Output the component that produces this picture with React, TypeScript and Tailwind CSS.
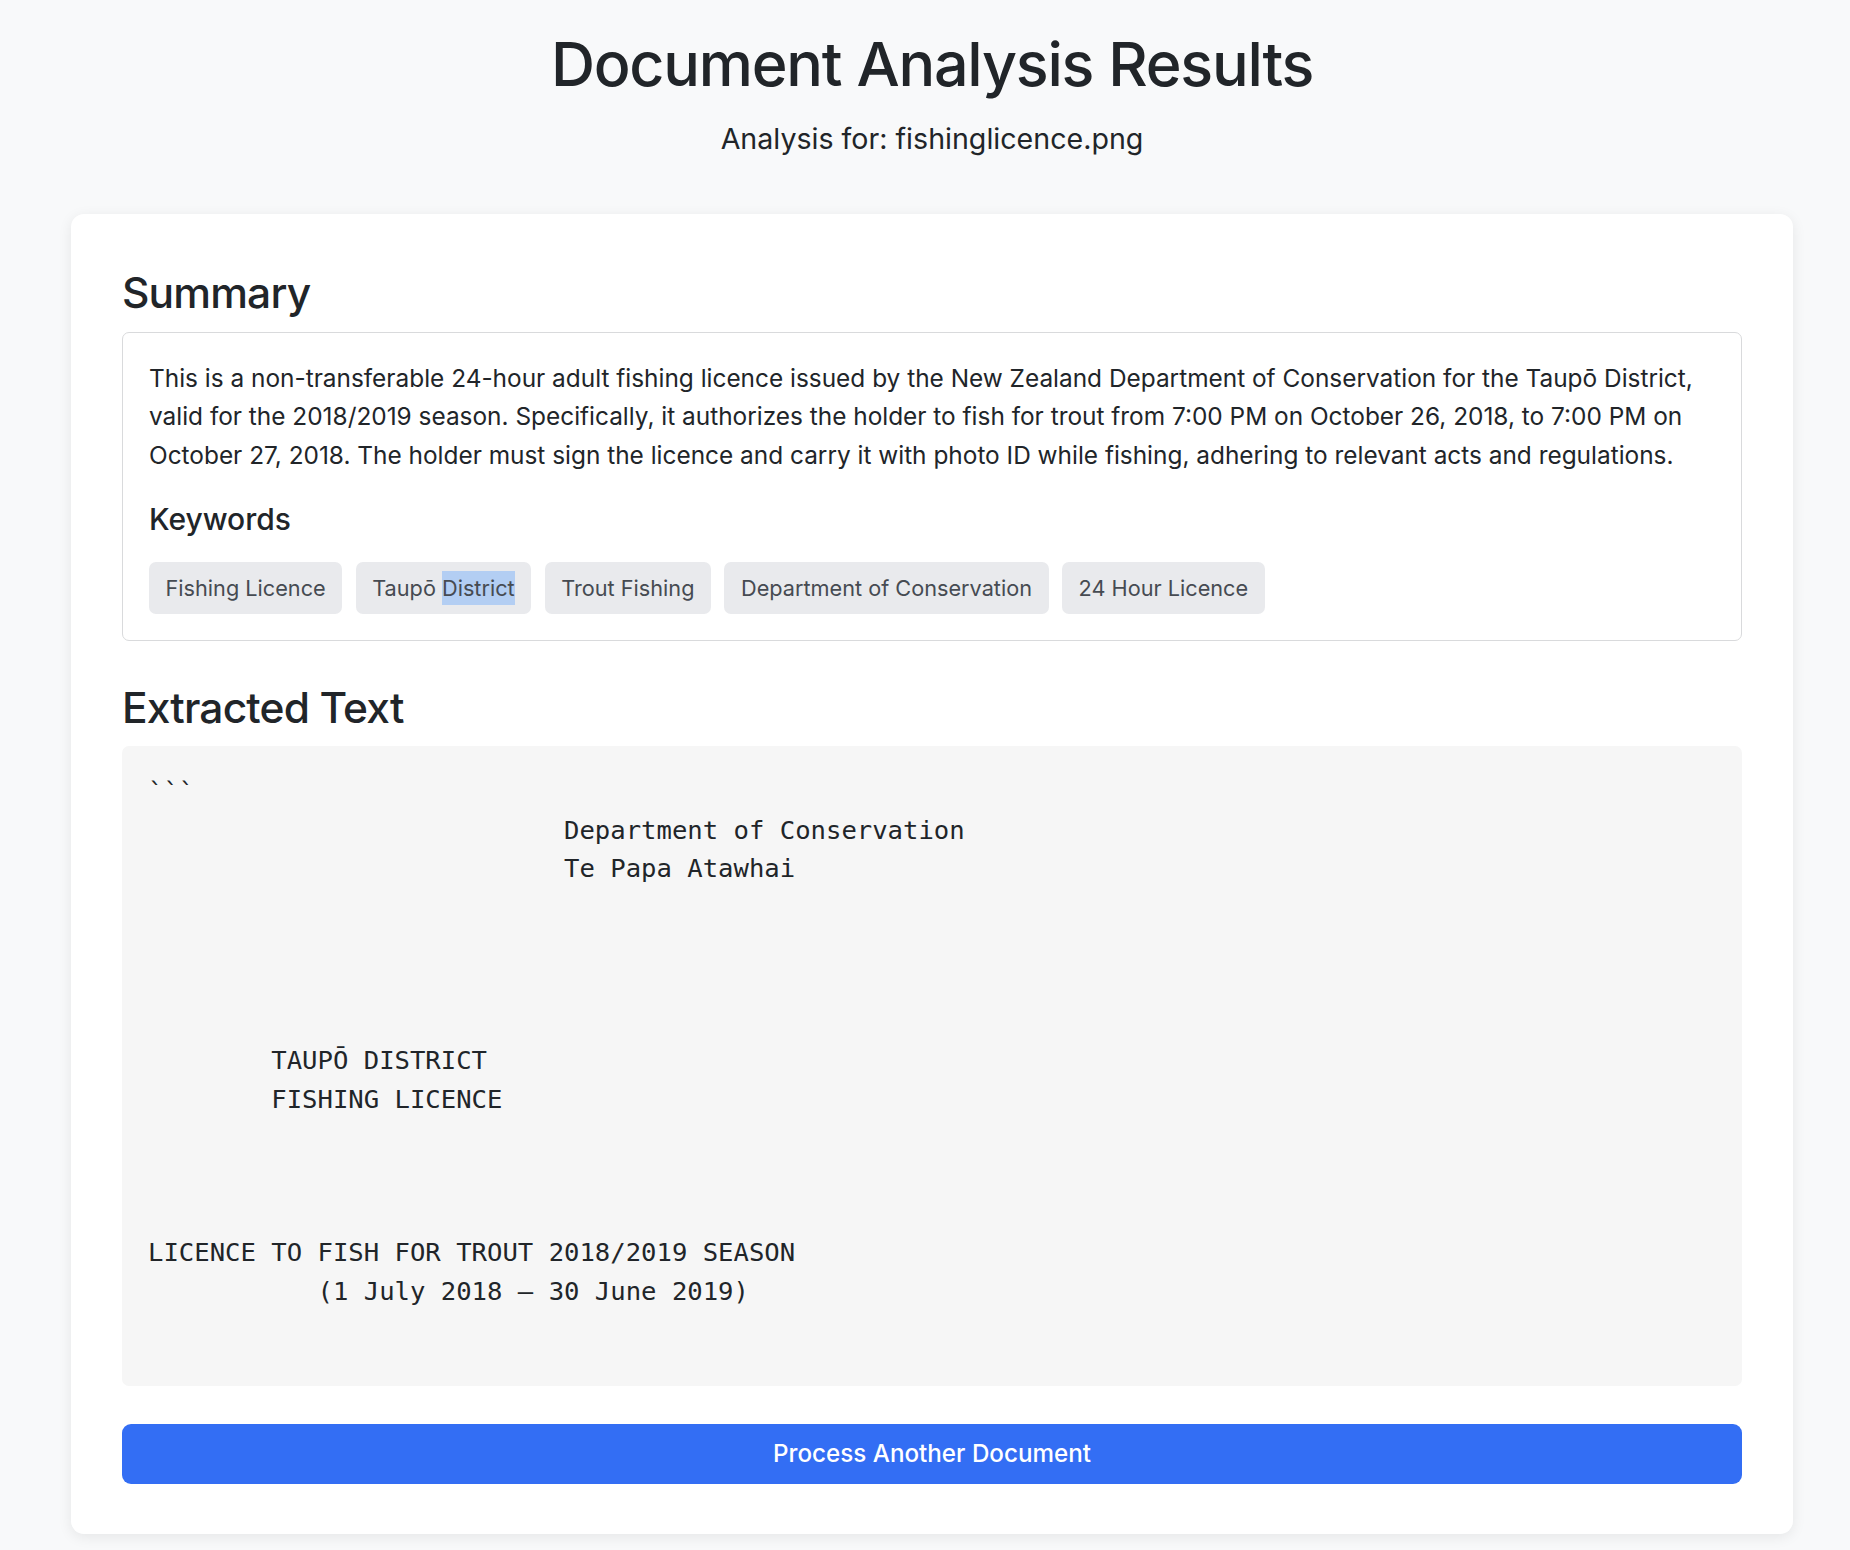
const keywords = [
  'Fishing Licence',
  'Taupō District',
  'Trout Fishing',
  'Department of Conservation',
  '24 Hour Licence',
];

const summary =
  'This is a non-transferable 24-hour adult fishing licence issued by the New Zealand Department of Conservation for the Taupō District, valid for the 2018/2019 season. Specifically, it authorizes the holder to fish for trout from 7:00 PM on October 26, 2018, to 7:00 PM on October 27, 2018. The holder must sign the licence and carry it with photo ID while fishing, adhering to relevant acts and regulations.';

const pad = (n: number) => ' '.repeat(n);

const extractedText = [
  '```',
  pad(27) + 'Department of Conservation',
  pad(27) + 'Te Papa Atawhai',
  '',
  '',
  '',
  '',
  pad(8) + 'TAUPŌ DISTRICT',
  pad(8) + 'FISHING LICENCE',
  '',
  '',
  '',
  'LICENCE TO FISH FOR TROUT 2018/2019 SEASON',
  pad(11) + '(1 July 2018 – 30 June 2019)',
  '',
  '',
  '',
].join('\n');

function KeywordChip({ label }: { label: string }) {
  // the second chip has part of its text selected in the screenshot
  const selected = label === 'Taupō District';
  return (
    <span className="flex h-[52px] items-center rounded-[7px] bg-[#e9eaed] px-[16.5px] text-[21.7px] leading-[34px] text-[#464b52]">
      <span className="whitespace-nowrap">
        {selected ? (
          <>
            Taupō <span className="inline-block bg-[#b3cef3] leading-[34px]">District</span>
          </>
        ) : (
          label
        )}
      </span>
    </span>
  );
}

export default function App() {
  return (
    <div className="min-h-screen bg-[#f8f9fa] pb-[16px] font-['Inter',sans-serif] text-[#212529]">
      <div className="ml-[71px] mr-[57px] pt-[28px]">
        {/* Header */}
        <h1 className="text-center text-[61px] font-medium leading-[1.2] tracking-[-0.02em]">
          Document Analysis Results
        </h1>
        <p className="mt-[17px] text-center text-[28.6px] leading-[1.5]">
          Analysis for: fishinglicence.png
        </p>

        {/* Results card */}
        <div className="mt-[53px] rounded-[13px] bg-white px-[51px] pt-[53px] pb-[50px] shadow-[0_3px_14px_rgba(0,0,0,0.08)]">
          <h2 className="mb-[14px] text-[42.5px] font-medium leading-[1.2] tracking-[-0.02em]">Summary</h2>
          <div className="rounded-[7px] border border-[#d9dadc] px-[26px] pt-[26px] pb-[26px]">
            <p className="text-[24.4px] leading-[38.4px]">{summary}</p>
            <h3 className="mt-[27px] text-[30px] font-medium leading-[1.2]">Keywords</h3>
            <div className="mt-[25px] flex flex-wrap gap-[13.5px]">
              {keywords.map((k) => (
                <KeywordChip key={k} label={k} />
              ))}
            </div>
          </div>

          <h2 className="mt-[41px] mb-[13px] text-[42.5px] font-medium leading-[1.2] tracking-[-0.02em]">
            Extracted Text
          </h2>
          <pre className="h-[640px] overflow-hidden rounded-[7px] bg-[#f6f6f6] p-[26px] font-['DejaVu_Sans_Mono',monospace] text-[25.6px] leading-[38.4px] whitespace-pre text-[#212529]">
            {extractedText}
          </pre>

          <button className="mt-[38px] flex h-[60px] w-full items-center justify-center rounded-[9px] bg-[#336ef4] text-[24.2px] font-medium text-white">
            Process Another Document
          </button>
        </div>
      </div>
    </div>
  );
}
